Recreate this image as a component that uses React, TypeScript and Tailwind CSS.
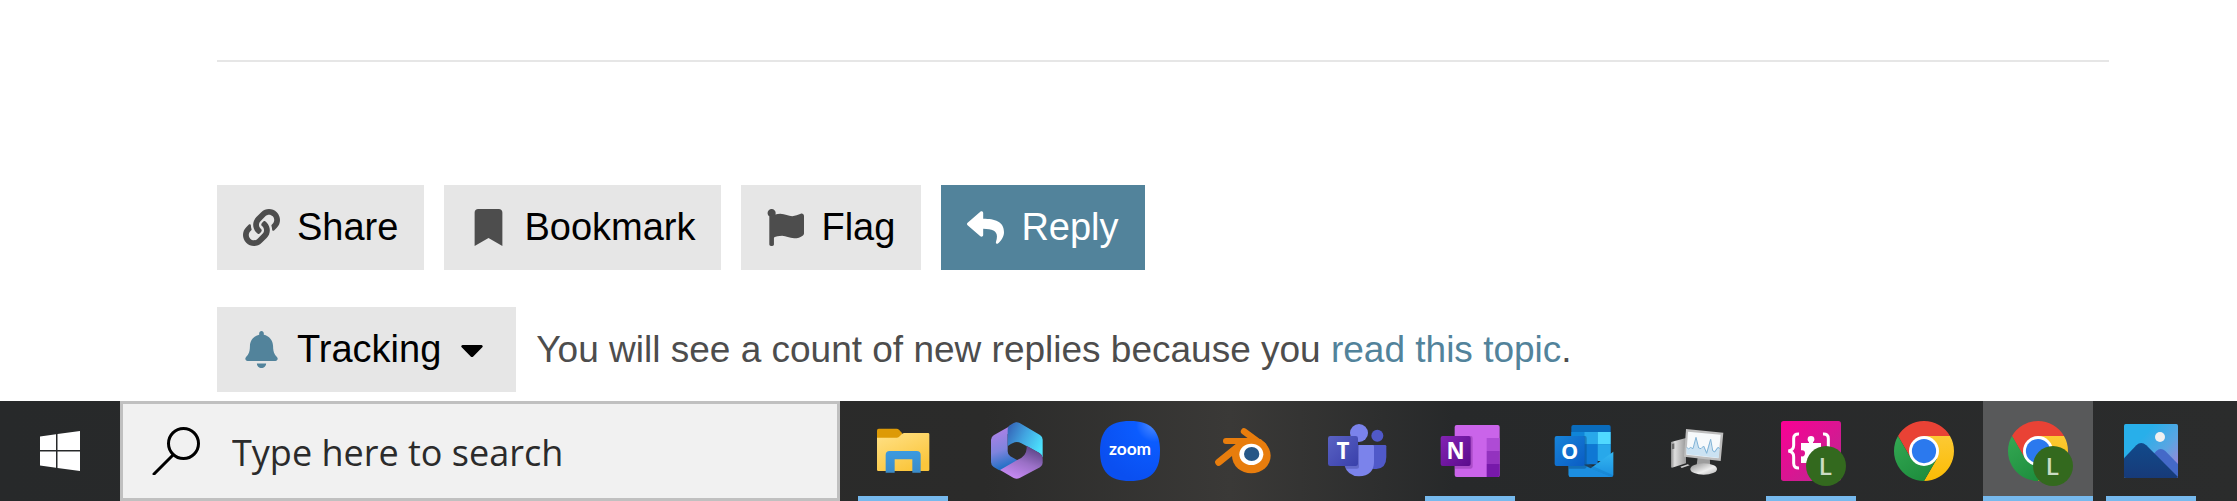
import type { ReactNode } from "react";
import { FaBell, FaBookmark, FaCaretDown, FaFlag, FaLink, FaReply } from "react-icons/fa";

const iconSize = "w-[60px] h-[60px] overflow-visible";

function ExplorerIcon() {
  return (
    <svg viewBox="0 0 180 180" className={iconSize}>
      <defs>
        <linearGradient id="folder" x1="0" y1="0" x2="0.6" y2="1">
          <stop offset="0" stopColor="#ffe187" />
          <stop offset="1" stopColor="#fbc63c" />
        </linearGradient>
        <linearGradient id="folderBlue" x1="0" y1="0" x2="0" y2="1">
          <stop offset="0" stopColor="#3b9ae0" />
          <stop offset="1" stopColor="#3a8bc9" />
        </linearGradient>
      </defs>
      <path d="M12 28q0-5 5-5h54q4 0 7 3l9 10v20H12z" fill="#dd9a06" />
      <path d="M12 50h60q5 0 8-4l7-7q3-3 7-3h71q4 0 4 4v106q0 4-4 4H16q-4 0-4-4z" fill="url(#folder)" />
      <path d="M38 155v-53q0-12 12-12h81q12 0 12 12v53h-25v-40H65v40z" fill="url(#folderBlue)" />
    </svg>
  );
}

function OfficeIcon() {
  return (
    <svg viewBox="0 0 180 180" className={iconSize}>
      <defs>
        <linearGradient id="m365a" x1="0.4" y1="0" x2="0.6" y2="1">
          <stop offset="0" stopColor="#b880e8" />
          <stop offset="0.55" stopColor="#7f84de" />
          <stop offset="1" stopColor="#0f6cc0" />
        </linearGradient>
        <linearGradient id="m365b" x1="0" y1="0.2" x2="1" y2="0.7">
          <stop offset="0" stopColor="#3566b8" />
          <stop offset="0.45" stopColor="#41a4e0" />
          <stop offset="1" stopColor="#4de5ff" />
        </linearGradient>
        <linearGradient id="m365c" x1="0.8" y1="0" x2="0.3" y2="1">
          <stop offset="0" stopColor="#54407f" />
          <stop offset="0.5" stopColor="#9a70c6" />
          <stop offset="1" stopColor="#c88bf5" />
        </linearGradient>
      </defs>
      <path d="M92 4 23 43q-8 5-8 14v67q0 9 8 14l14 8q8 4 16 0l44-27-24-13q-8-5-8-15V40z" fill="url(#m365a)" />
      <path d="M65 76V27q0-11 8-15l10-6q9-5 18 0l61 36q8 5 8 14v54q-2-9-10-14l-54-29q-13-7-25-1-14 7-16 10z" fill="url(#m365b)" />
      <path d="m42 147 53-31q26-9 27-34V74l38 22q10 6 10 17v12q0 9-8 14l-61 32q-9 5-18 0z" fill="url(#m365c)" />
    </svg>
  );
}

function ZoomIcon() {
  return (
    <svg viewBox="0 0 180 180" className={iconSize}>
      <defs>
        <radialGradient id="zoomBg" cx="0.9" cy="0.05" r="1">
          <stop offset="0" stopColor="#4f8cff" />
          <stop offset="0.3" stopColor="#0b5cff" />
          <stop offset="1" stopColor="#0a4ff0" />
        </radialGradient>
      </defs>
      <path d="M90 0c62 0 90 28 90 90s-28 90-90 90S0 152 0 90 28 0 90 0z" fill="url(#zoomBg)" />
      <text x="90" y="103" textAnchor="middle" fontSize="52" fontWeight="700" fontFamily="Lato, sans-serif" fill="#fff">
        zoom
      </text>
    </svg>
  );
}

function BlenderIcon() {
  return (
    <svg viewBox="0 0 180 180" className={iconSize}>
      <g stroke="#e87d0d" strokeLinecap="round" fill="none">
        <path d="m93 31 58 43" strokeWidth="19" />
        <path d="M39 60h80" strokeWidth="18" />
        <path d="m17 124 68-55" strokeWidth="21" />
      </g>
      <path d="m74 66 36-16 34 5 13 12-20 40-74 0z" fill="#e87d0d" />
      <ellipse cx="115" cy="104" rx="58" ry="53" fill="#e87d0d" />
      <ellipse cx="115" cy="100" rx="36" ry="32" fill="#fff" />
      <ellipse cx="116" cy="99" rx="23" ry="21" fill="#265787" />
    </svg>
  );
}

function TeamsIcon() {
  return (
    <svg viewBox="0 0 180 180" className={iconSize}>
      <defs>
        <linearGradient id="teams" x1="0" y1="0" x2="1" y2="1">
          <stop offset="0" stopColor="#5a62c3" />
          <stop offset="1" stopColor="#3940ab" />
        </linearGradient>
      </defs>
      <circle cx="151" cy="44" r="18" fill="#5059c9" />
      <path d="M130 72h44q4 0 4 4v32q0 34-30 36-16 0-22-6z" fill="#5059c9" />
      <circle cx="96" cy="36" r="27" fill="#7b83eb" />
      <path d="M60 72h77q4 0 4 4v46q0 42-45 44-35-2-43-32z" fill="#7b83eb" />
      <path d="M60 72h36v66q0 5-6 5H56l-3-9z" fill="#4a50a8" opacity="0.5" />
      <rect x="3" y="45" width="90" height="90" rx="7" fill="url(#teams)" />
      <text x="48" y="113" textAnchor="middle" fontSize="67" fontWeight="700" fontFamily="Open Sans, sans-serif" fill="#fff">
        T
      </text>
    </svg>
  );
}

function OneNoteIcon() {
  return (
    <svg viewBox="0 0 180 180" className={iconSize}>
      <defs>
        <linearGradient id="onenote" x1="0" y1="0" x2="1" y2="1">
          <stop offset="0" stopColor="#8324b3" />
          <stop offset="1" stopColor="#5c0b8c" />
        </linearGradient>
      </defs>
      <rect x="44" y="12" width="135" height="156" rx="6" fill="#ca64ea" />
      <path d="M140 51h39v39h-39z" fill="#ae4bd5" />
      <path d="M140 90h39v39h-39z" fill="#9332bf" />
      <path d="M140 129h39v33q0 6-6 6h-33z" fill="#7719aa" />
      <path d="M44 45h49q5 0 5 6v85q0 7-6 7H44z" fill="#7a2a96" opacity="0.4" />
      <rect x="2" y="45" width="90" height="90" rx="6" fill="url(#onenote)" />
      <text x="47" y="114" textAnchor="middle" fontSize="67" fontWeight="700" fontFamily="Open Sans, sans-serif" fill="#fff">
        N
      </text>
    </svg>
  );
}

function OutlookIcon() {
  return (
    <svg viewBox="0 0 180 180" className={iconSize}>
      <defs>
        <linearGradient id="outlook" x1="0" y1="0" x2="1" y2="1">
          <stop offset="0" stopColor="#1784d9" />
          <stop offset="1" stopColor="#0a5cc4" />
        </linearGradient>
        <linearGradient id="envelope" x1="0" y1="0" x2="0" y2="1">
          <stop offset="0" stopColor="#35b8f1" />
          <stop offset="1" stopColor="#1a8fe0" />
        </linearGradient>
      </defs>
      <path d="M52 18q0-6 6-6h106q6 0 6 6v100H52z" fill="#0a6cbd" />
      <path d="M52 33h39v37H52z" fill="#0f85d8" />
      <path d="M91 33h40v37H91z" fill="#28a8ea" />
      <path d="M131 33h39v37h-39z" fill="#50d9ff" />
      <path d="M52 70h39v60H52z" fill="#0863b0" />
      <path d="M91 70h40v60H91z" fill="#0f78d4" />
      <path d="M131 70h39v50h-39z" fill="#28a8ea" />
      <path d="m44 110 66 32 68-50v70q0 6-6 6H50q-6 0-6-6z" fill="url(#envelope)" />
      <path d="M44 98v20l127 50q7 0 7-5l-67-30z" fill="#0d6fc0" opacity="0.35" />
      <path d="M44 118v44q0 6 6 6h121z" fill="#1c8ee0" />
      <path d="M44 45h49q5 0 5 6v85q0 7-6 7H44z" fill="#084a86" opacity="0.45" />
      <rect x="2" y="45" width="90" height="90" rx="6" fill="url(#outlook)" />
      <text x="47" y="113" textAnchor="middle" fontSize="65" fontWeight="700" fontFamily="Open Sans, sans-serif" fill="#fff">
        O
      </text>
    </svg>
  );
}

function MonitorIcon() {
  return (
    <svg viewBox="0 0 180 180" className={iconSize}>
      <defs>
        <linearGradient id="tower" x1="0" y1="0" x2="1" y2="0">
          <stop offset="0" stopColor="#8d8d8d" />
          <stop offset="0.25" stopColor="#dedede" />
          <stop offset="1" stopColor="#9a9a9a" />
        </linearGradient>
        <linearGradient id="stand" x1="0" y1="0" x2="1" y2="1">
          <stop offset="0" stopColor="#8f8f8f" />
          <stop offset="0.6" stopColor="#eeeeee" />
          <stop offset="1" stopColor="#b4b4b4" />
        </linearGradient>
      </defs>
      <path d="m12 63 45-12v76l-42 13q-3 0-3-3z" fill="url(#tower)" />
      <path d="m15 69 7-2v16l-7 2z" fill="#6c6c6c" />
      <path d="m40 137 22-7 6 3-24 8z" fill="#cfcfcf" />
      <path d="M92 108h36l2 32H88z" fill="#9d9d9d" />
      <ellipse cx="110" cy="144" rx="40" ry="17" fill="url(#stand)" />
      <path d="m57 24 112 11-8 85-110-13z" fill="#bdbdbd" />
      <path d="m63 32 98 9-7 71-96-11z" fill="#f6f9fb" />
      <path d="m58 80 6 5 6-5 8 4 9-34 8 32 7 2 8-8 9 14 10-32 6 28 7 4 10-12 6 4-3 29-96-11z" fill="#cbe2f2" />
      <path d="m59 79 6 5 5-5 8 4 9-34 8 32 7 2 8-8 9 22 12-42 6 34 6 4 10-14 5 4" fill="none" stroke="#7fb2d6" strokeWidth="3" />
    </svg>
  );
}

// profile letter that sits on the lower right of an app icon
function ProfileBadge() {
  return (
    <g>
      <circle cx="135" cy="135" r="60" fill="#33691e" />
      <text x="134" y="161" textAnchor="middle" fontSize="70" fontFamily="Roboto, sans-serif" fontWeight="500" fill="#cbdcc4">
        L
      </text>
    </g>
  );
}

function ExtensionIcon() {
  return (
    <svg viewBox="0 0 180 180" className={iconSize}>
      <defs>
        <linearGradient id="pink" x1="0" y1="0" x2="1" y2="1">
          <stop offset="0" stopColor="#fb0094" />
          <stop offset="1" stopColor="#b82a90" />
        </linearGradient>
      </defs>
      <rect width="180" height="180" rx="8" fill="url(#pink)" />
      <g fill="none" stroke="#fff" strokeWidth="9">
        <path d="M54 39q-16-1-16 14v20q0 15-16 17 16 2 16 17v20q0 15 16 14" />
        <path d="M126 39q16-1 16 14v20q0 15 16 17-16 2-16 17v20" />
      </g>
      <circle cx="90" cy="55" r="10" fill="#fff" />
      <path d="M60 66h24v-6h12v6h24v60H60v-20q12 2 12-9t-12-9z" fill="#fff" />
      <ProfileBadge />
    </svg>
  );
}

function ChromeIcon({ id, badge }: { id: string; badge?: boolean }) {
  return (
    <svg viewBox="0 0 180 180" className={iconSize}>
      <defs>
        <linearGradient id={id + "-green"} x1="0" y1="0" x2="0.6" y2="1">
          <stop offset="0" stopColor="#34a853" />
          <stop offset="1" stopColor="#1e8e3e" />
        </linearGradient>
        <linearGradient id={id + "-yellow"} x1="0" y1="0" x2="0" y2="1">
          <stop offset="0" stopColor="#fcc934" />
          <stop offset="1" stopColor="#fbbc04" />
        </linearGradient>
      </defs>
      <g transform="scale(3.75)">
        <path d="M24 12h20.78A24 24 0 0 0 3.21 12L13.6 30 24 24z" fill="#e94235" />
        <path d="M34.39 30 24 48a24 24 0 0 0 20.78-36H24v12z" fill={`url(#${id}-yellow)`} />
        <path d="M13.61 30 3.21 12A24 24 0 0 0 24 48l10.39-18L24 24z" fill={`url(#${id}-green)`} />
        <circle cx="24" cy="24" r="12" fill="#fff" />
        <circle cx="24" cy="24" r="9.7" fill="#2b79ee" />
      </g>
      {badge && <ProfileBadge />}
    </svg>
  );
}

function PhotosIcon() {
  return (
    <svg viewBox="0 0 180 180" className={iconSize}>
      <defs>
        <linearGradient id="sky" x1="0.3" y1="0.3" x2="1" y2="0.9">
          <stop offset="0" stopColor="#28afea" />
          <stop offset="0.5" stopColor="#5aa5e2" />
          <stop offset="1" stopColor="#a97fd8" />
        </linearGradient>
        <linearGradient id="hill" x1="0" y1="0" x2="0" y2="1">
          <stop offset="0" stopColor="#114a8b" />
          <stop offset="1" stopColor="#173a78" />
        </linearGradient>
        <clipPath id="photoFrame">
          <rect x="9" y="9" width="162" height="162" rx="5" />
        </clipPath>
      </defs>
      <g clipPath="url(#photoFrame)">
        <path d="M9 9h162v162H9z" fill="url(#sky)" />
        <circle cx="117" cy="48" r="15" fill="#f0f0f0" />
        <path d="m70 130 36-40q13-12 27 0l38 39v42H90z" fill="#4469c8" />
        <path d="M9 112 46 73q14-14 30 0l95 95v5H9z" fill="url(#hill)" />
      </g>
    </svg>
  );
}

type TaskbarApp = { name: string; icon: ReactNode; open?: boolean; active?: boolean };

const apps: TaskbarApp[] = [
  { name: "File Explorer", icon: <ExplorerIcon />, open: true },
  { name: "Microsoft 365", icon: <OfficeIcon /> },
  { name: "Zoom", icon: <ZoomIcon /> },
  { name: "Blender", icon: <BlenderIcon /> },
  { name: "Teams", icon: <TeamsIcon /> },
  { name: "OneNote", icon: <OneNoteIcon />, open: true },
  { name: "Outlook", icon: <OutlookIcon /> },
  { name: "Resource Monitor", icon: <MonitorIcon /> },
  { name: "Extension app", icon: <ExtensionIcon />, open: true },
  { name: "Chrome", icon: <ChromeIcon id="chrome" /> },
  { name: "Chrome profile L", icon: <ChromeIcon id="chromeL" badge />, open: true, active: true },
  { name: "Photos", icon: <PhotosIcon />, open: true },
];

function Taskbar() {
  return (
    <footer className="flex h-[100px] bg-[linear-gradient(to_right,#27292a,#2b2b2a_44%,#3a3937_55%,#27292a_65%,#2b2c2c)]">
      <button aria-label="Start" className="w-[120px] shrink-0 flex items-center justify-center">
        <svg viewBox="0 0 40 40" className="w-10 h-10" fill="#fff">
          <path d="M0 5.500 16 3.200V19H0zM17.500 3 40 0v19H17.500zM0 20.500h16v16.300L0 34.500zM17.500 20.500H40V40l-22.500-3z" />
        </svg>
      </button>

      <label className="w-[720px] flex items-center gap-8 border-3 border-[#c0c0c0] bg-[#f1f1f1] pl-[29px]">
        <svg viewBox="0 0 48 48" className="w-12 h-12 shrink-0" fill="none" stroke="#000" strokeWidth="3">
          <circle cx="31.500" cy="16.500" r="15" />
          <path d="M21 28 2 47" strokeLinecap="round" />
        </svg>
        <input
          type="text"
          aria-label="Search"
          placeholder="Type here to search"
          className="w-full min-w-0 pt-1 bg-transparent outline-none font-['Open_Sans',sans-serif] text-[36px] placeholder:text-[#2b2b2b]"
        />
      </label>

      <nav className="flex-1 grid grid-cols-12 justify-items-center pl-[6px] pr-[29px]">
        {apps.map((app) => (
          <button
            key={app.name}
            aria-label={app.name}
            className={`relative w-[110px] flex items-center justify-center ${app.active ? "bg-[#58595a]" : ""}`}
          >
            {app.icon}
            {app.open && (
              <span className={`absolute bottom-0 h-[5px] bg-[#76b9ed] ${app.active ? "w-full" : "w-[90px]"}`} />
            )}
          </button>
        ))}
      </nav>
    </footer>
  );
}

function TopicButton({ icon, primary, children }: { icon: ReactNode; primary?: boolean; children: ReactNode }) {
  return (
    <button
      className={`h-[85px] px-[26px] flex items-center gap-[17px] text-[38px] ${
        primary ? "bg-[#52839b] text-white" : "bg-[#e6e6e6] text-black"
      }`}
    >
      {icon}
      {children}
    </button>
  );
}

export default function App() {
  const icon = "w-[37px] h-[37px] text-[#4d4d4d]";

  return (
    <div className="bg-white">
      <main className="pt-[60px] pb-[9px] pl-[217px] pr-[128px] font-['Liberation_Sans',Arial,sans-serif] text-[37px] text-[#4d4d4d]">
        <hr className="border-t-2 border-[#e6e6e6]" />

        <div className="mt-[123px] flex gap-5">
          <TopicButton icon={<FaLink className={icon} />}>Share</TopicButton>
          <TopicButton icon={<FaBookmark className={icon} />}>Bookmark</TopicButton>
          <TopicButton icon={<FaFlag className={icon} />}>Flag</TopicButton>
          <TopicButton primary icon={<FaReply className="w-[37px] h-[37px]" />}>
            Reply
          </TopicButton>
        </div>

        <div className="mt-[37px] flex items-center gap-5">
          <TopicButton icon={<FaBell className="w-[37px] h-[37px] text-[#52839b]" />}>
            Tracking
            <FaCaretDown className="w-7 h-[37px] mr-1" />
          </TopicButton>
          <p>
            You will see a count of new replies because you{" "}
            <a href="#" className="text-[#52839b]">
              read this topic
            </a>
            .
          </p>
        </div>
      </main>

      <Taskbar />
    </div>
  );
}
